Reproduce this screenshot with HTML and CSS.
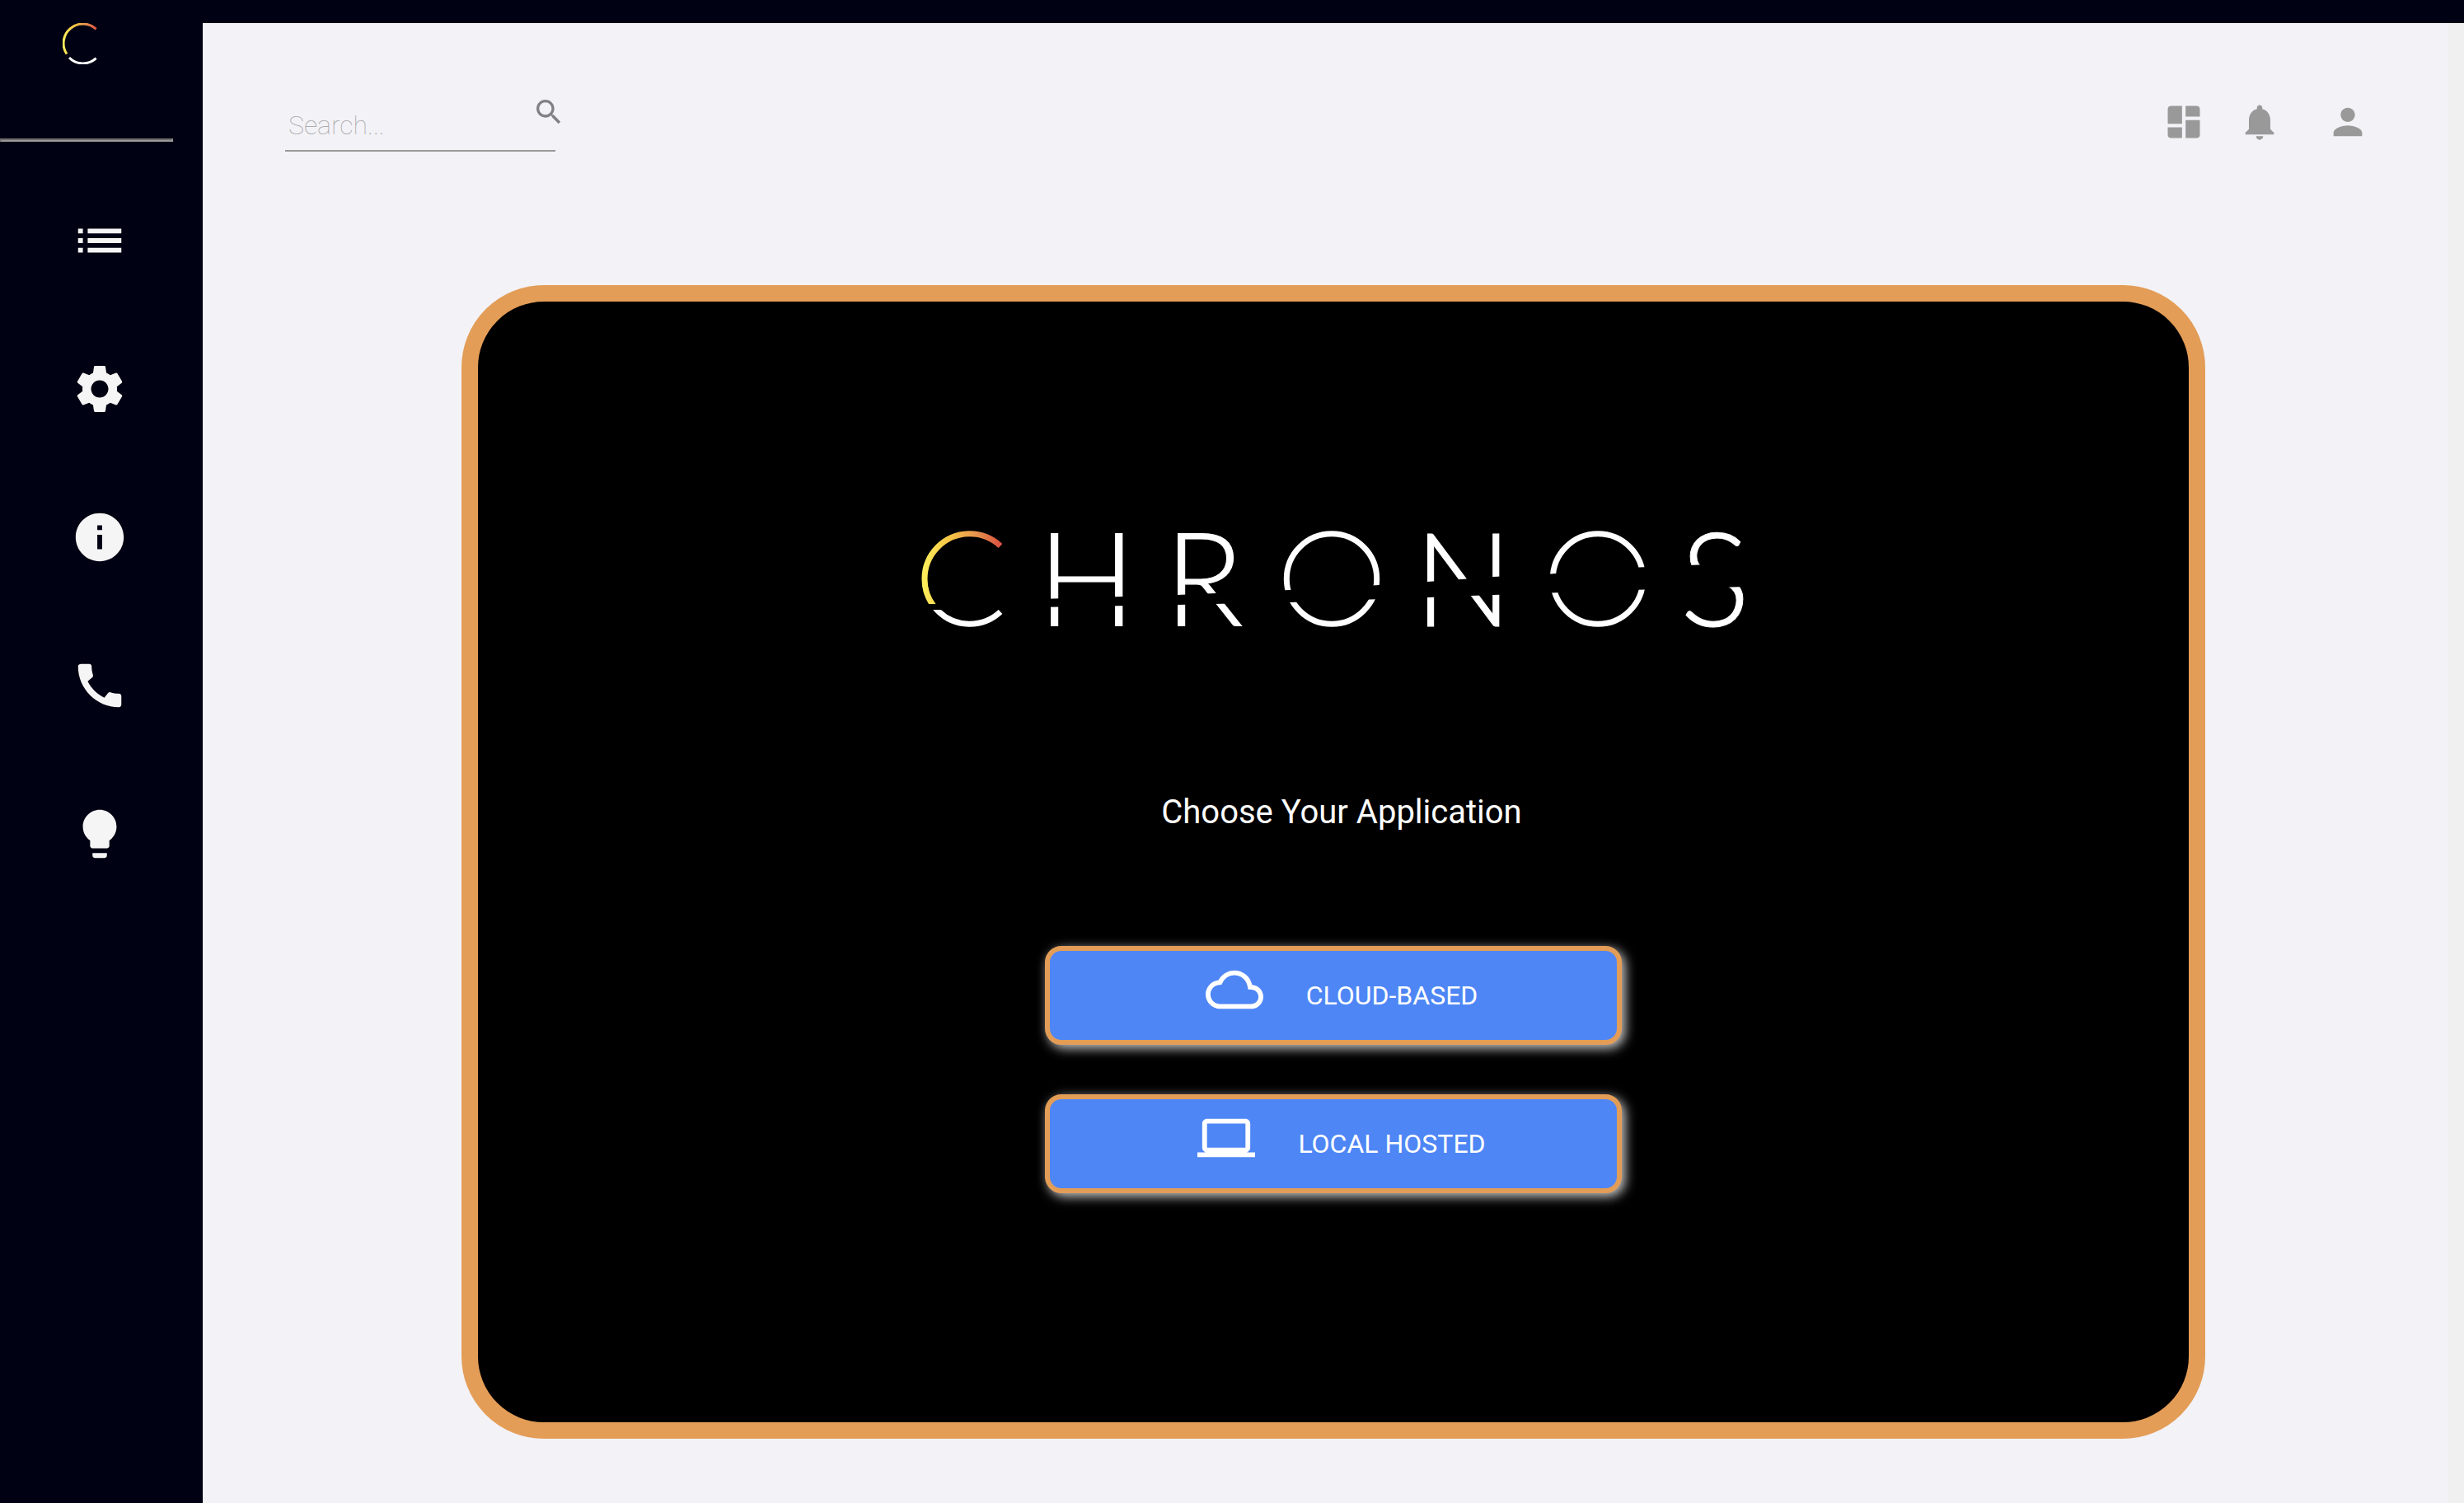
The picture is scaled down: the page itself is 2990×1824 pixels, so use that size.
FILE: index.html
```
<!DOCTYPE html>
<html lang="en">
<head>
    <meta charset="UTF-8">
    <meta name="viewport" content="width=device-width, initial-scale=1.0">
    <title>Chronos</title>
    <link rel="stylesheet" href="styles.css">
</head>
<body>
    <aside class="sidebar">
        <a href="#" class="brand" aria-label="Chronos">
            <svg viewBox="0 0 50 50">
                <defs>
                    <linearGradient id="sun" x1="0" y1="0" x2="50" y2="0" gradientUnits="userSpaceOnUse">
                        <stop offset="0" stop-color="#fdf05c"/>
                        <stop offset="0.3" stop-color="#f6c445"/>
                        <stop offset="0.55" stop-color="#e8974f"/>
                        <stop offset="0.85" stop-color="#d9493f"/>
                    </linearGradient>
                </defs>
                <path d="M40.6 7.3A23.5 23.5 0 0 0 5 37.5" fill="none" stroke="url(#sun)" stroke-width="3"/>
                <path d="M8 42A23.5 23.5 0 0 0 40.6 42.7" fill="none" stroke="#fff" stroke-width="3"/>
            </svg>
        </a>
        <hr class="divider">
        <nav class="menu">
            <a href="#" aria-label="Services"><svg viewBox="0 0 24 24"><path d="M3 13h2v-2H3v2zm0 4h2v-2H3v2zm0-8h2V7H3v2zm4 4h14v-2H7v2zm0 4h14v-2H7v2zM7 7v2h14V7H7z"/></svg></a>
            <a href="#" aria-label="Settings"><svg viewBox="0 0 24 24"><path d="M19.14 12.94c.04-.3.06-.61.06-.94 0-.32-.02-.64-.07-.94l2.03-1.58c.18-.14.23-.41.12-.61l-1.92-3.32c-.12-.22-.37-.29-.59-.22l-2.39.96c-.5-.38-1.03-.7-1.62-.94l-.36-2.54c-.04-.24-.24-.41-.48-.41h-3.84c-.24 0-.43.17-.47.41l-.36 2.54c-.59.24-1.13.57-1.62.94l-2.39-.96c-.22-.08-.47 0-.59.22L2.74 8.87c-.12.21-.08.47.12.61l2.03 1.58c-.05.3-.09.63-.09.94s.02.64.07.94l-2.03 1.58c-.18.14-.23.41-.12.61l1.92 3.32c.12.22.37.29.59.22l2.39-.96c.5.38 1.03.7 1.62.94l.36 2.54c.05.24.24.41.48.41h3.84c.24 0 .44-.17.47-.41l.36-2.54c.59-.24 1.13-.56 1.62-.94l2.39.96c.22.08.47 0 .59-.22l1.92-3.32c.12-.22.07-.47-.12-.61l-2.01-1.58zM12 15.6c-1.98 0-3.6-1.62-3.6-3.6s1.62-3.6 3.6-3.6 3.6 1.62 3.6 3.6-1.62 3.6-3.6 3.6z"/></svg></a>
            <a href="#" aria-label="About"><svg viewBox="0 0 24 24"><path d="M12 2C6.48 2 2 6.48 2 12s4.48 10 10 10 10-4.48 10-10S17.52 2 12 2zm1 15h-2v-6h2v6zm0-8h-2V7h2v2z"/></svg></a>
            <a href="#" aria-label="Contact"><svg viewBox="0 0 24 24"><path d="M20.01 15.38c-1.23 0-2.42-.2-3.53-.56-.35-.12-.74-.03-1.01.24l-1.57 1.97c-2.83-1.35-5.48-3.9-6.89-6.83l1.95-1.66c.27-.28.35-.67.24-1.02-.37-1.11-.56-2.3-.56-3.53 0-.54-.45-.99-.99-.99H4.19C3.65 3 3 3.24 3 3.99 3 13.28 10.73 21 20.01 21c.71 0 .99-.63.99-1.18v-3.45c0-.54-.45-.99-.99-.99z"/></svg></a>
            <a href="#" aria-label="Theme"><svg viewBox="0 0 24 24"><path d="M9 21c0 .55.45 1 1 1h4c.55 0 1-.45 1-1v-1H9v1zm3-19C8.14 2 5 5.14 5 9c0 2.38 1.19 4.47 3 5.74V17c0 .55.45 1 1 1h6c.55 0 1-.45 1-1v-2.26c1.81-1.27 3-3.36 3-5.74 0-3.86-3.14-7-7-7z"/></svg></a>
        </nav>
    </aside>

    <main class="main">
        <header class="header">
            <form class="search">
                <input type="text" aria-label="Search" placeholder="Search...">
                <button type="button" aria-label="Search"><svg viewBox="0 0 24 24"><path d="M15.5 14h-.79l-.28-.27C15.41 12.59 16 11.11 16 9.5 16 5.91 13.09 3 9.5 3S3 5.91 3 9.5 5.91 16 9.5 16c1.61 0 3.09-.59 4.23-1.57l.27.28v.79l5 4.99L20.49 19l-4.99-5zm-6 0C7.01 14 5 11.99 5 9.5S7.01 5 9.5 5 14 7.01 14 9.5 11.99 14 9.5 14z"/></svg></button>
            </form>
            <div class="header-icons">
                <button type="button" aria-label="Dashboard"><svg viewBox="0 0 24 24"><path d="M5 3h6v10H3V5q0-2 2-2zM13 3h6q2 0 2 2v4h-8zM3 15h8v6H5q-2 0-2-2zM13 11h8v8q0 2-2 2h-6z"/></svg></button>
                <button type="button" aria-label="Notifications"><svg viewBox="0 0 24 24"><path d="M12 22c1.1 0 2-.9 2-2h-4c0 1.1.89 2 2 2zm6-6v-5c0-3.07-1.64-5.64-4.5-6.32V4c0-.83-.67-1.5-1.5-1.5s-1.5.67-1.5 1.5v.68C7.63 5.36 6 7.92 6 11v5l-2 2v1h16v-1l-2-2z"/></svg></button>
                <button type="button" class="profile" aria-label="Profile"><svg viewBox="0 0 24 24"><path d="M12 12c2.21 0 4-1.79 4-4s-1.79-4-4-4-4 1.79-4 4 1.79 4 4 4zm0 2c-2.67 0-8 1.34-8 4v2h16v-2c0-2.66-5.33-4-8-4z"/></svg></button>
            </div>
        </header>

        <section class="card">
            <svg class="logo" viewBox="0 0 1000 120" role="img" aria-label="Chronos">
                <defs>
                    <linearGradient id="sunrise" x1="0" y1="0" x2="118" y2="0" gradientUnits="userSpaceOnUse">
                        <stop offset="0" stop-color="#fdf05c"/>
                        <stop offset="0.3" stop-color="#f6c445"/>
                        <stop offset="0.55" stop-color="#e8974f"/>
                        <stop offset="0.85" stop-color="#d9493f"/>
                    </linearGradient>
                    <clipPath id="top"><rect x="0" y="0" width="140" height="91"/></clipPath>
                    <clipPath id="bottom"><rect x="0" y="98" width="140" height="30"/></clipPath>
                </defs>
                <!-- sun mark -->
                <g class="ring">
                    <path d="M96 20.5A54.7 54.7 0 1 0 96 100.5" stroke="url(#sunrise)" clip-path="url(#top)"/>
                    <path class="white" d="M96 20.5A54.7 54.7 0 1 0 96 100.5" clip-path="url(#bottom)"/>
                    <circle class="white" cx="498" cy="60.5" r="54.7"/>
                    <circle class="white" cx="821" cy="60.5" r="54.7"/>
                </g>
                <text y="118" x="141 295">HR</text>
                <text y="118" x="598">N</text>
                <text y="118" x="921">S</text>
                <!-- horizon cut -->
                <path class="cut" d="M140 85L310 80L380 77L447 74L556 68L614 64L694 58L757 55L860 47L1000 41V70L860 74L694 80L614 83L447 89L310 92L140 95Z"/>
            </svg>

            <h1>Choose Your Application</h1>

            <div class="choices">
                <button type="button">
                    <svg viewBox="0 0 24 24"><path d="M19.35 10.04C18.67 6.59 15.64 4 12 4 9.11 4 6.6 5.64 5.35 8.04 2.34 8.36 0 10.91 0 14c0 3.31 2.69 6 6 6h13c2.76 0 5-2.24 5-5 0-2.64-2.05-4.78-4.65-4.96zM19 18H6c-2.21 0-4-1.79-4-4 0-2.05 1.53-3.76 3.56-3.97l1.07-.11.5-.95C8.08 7.14 9.94 6 12 6c2.62 0 4.88 1.86 5.39 4.43l.3 1.5 1.53.11c1.56.1 2.78 1.41 2.78 2.96 0 1.65-1.35 3-3 3z"/></svg>
                    <span>CLOUD-BASED</span>
                </button>
                <button type="button">
                    <svg viewBox="0 0 24 24"><path d="M20 18c1.1 0 1.99-.9 1.99-2L22 6c0-1.1-.9-2-2-2H4c-1.1 0-2 .9-2 2v10c0 1.1.9 2 2 2H0v2h24v-2h-4zM4 6h16v10H4V6z"/></svg>
                    <span>LOCAL HOSTED</span>
                </button>
            </div>
        </section>
    </main>
</body>
</html>
```
FILE: styles.css
```
* { margin: 0; padding: 0; box-sizing: border-box; }
body {
    display: flex;
    min-height: 100vh;
    font-family: Roboto, sans-serif;
    background: #000112;
}
svg {
    display: block;
    fill: currentColor;
}
button {
    border: none;
    background: none;
    color: inherit;
    font: inherit;
    cursor: pointer;
}

/* Sidebar */
.sidebar {
    width: 246px;
    flex-shrink: 0;
    padding-top: 28px;
    color: #f5f5f5;
}
.brand {
    display: block;
    width: 50px;
    margin-left: 76px;
}
.divider {
    width: 210px;
    margin-top: 90px;
    border: 2px solid;
    border-color: #6f6f6f #9a9a9a #9a9a9a #6f6f6f;
}
.menu {
    display: flex;
    flex-direction: column;
    align-items: center;
    gap: 110px;
    margin-top: 85px;
    padding-right: 4px;
}
.menu a {
    width: 70px;
    color: inherit;
}

/* Main area */
.main {
    flex: 1;
    margin-top: 28px;
    background: #f3f2f7;
    border-right: 20px solid #f0f0f0;
}
.header {
    display: flex;
    justify-content: space-between;
    align-items: flex-start;
    padding: 88px 95px 0 100px;
}
.search {
    display: flex;
    align-items: flex-start;
}
.search input {
    width: 328px;
    height: 68px;
    padding: 6px 4px 0;
    border: none;
    border-bottom: 2px solid #999;
    background: transparent;
    font-family: Roboto, sans-serif;
    font-size: 32px;
    font-weight: 100;
    outline: none;
}
.search input::placeholder {
    color: #aaa;
    opacity: 1;
}
.search button {
    width: 40px;
    margin-left: -28px;
    color: #808085;
}
.header-icons {
    display: flex;
    gap: 40px;
    margin-top: 6px;
    color: #999;
}
.header-icons button {
    width: 52px;
}
.header-icons .profile {
    margin-left: 15px;
}

/* Application picker */
.card {
    display: flex;
    flex-direction: column;
    align-items: center;
    width: calc(100% - 608px);
    min-height: 1400px;
    margin: 162px 294px 78px 314px;
    padding-top: 276px;
    border: 20px solid #e39d57;
    border-radius: 100px;
    background: #000;
    color: #fff;
}
.logo {
    width: 1000px;
    height: 120px;
    overflow: visible;
    font-family: Lato, sans-serif;
    font-size: 158px;
    font-weight: 300;
}
.logo text {
    stroke: #fff;
    stroke-width: 1;
}
.logo .ring {
    fill: none;
    stroke-width: 7;
}
.logo .white {
    stroke: #fff;
}
.logo .cut {
    fill: #000;
}
.card h1 {
    margin-top: 194px;
    padding-left: 20px;
    font-size: 40px;
    line-height: 60px;
    font-weight: 400;
}
.choices {
    display: flex;
    flex-direction: column;
    gap: 60px;
    width: 700px;
    max-width: 90%;
    margin-top: 132px;
}
.choices button {
    display: flex;
    align-items: center;
    justify-content: center;
    gap: 52px;
    height: 120px;
    padding-left: 20px;
    border: 6px solid #e39d57;
    border-radius: 20px;
    background: #4e86f5;
    box-shadow: 4px 4px 14px #ccc;
    font-size: 32px;
}
.choices svg {
    width: 70px;
    margin-bottom: 14px;
}
```
